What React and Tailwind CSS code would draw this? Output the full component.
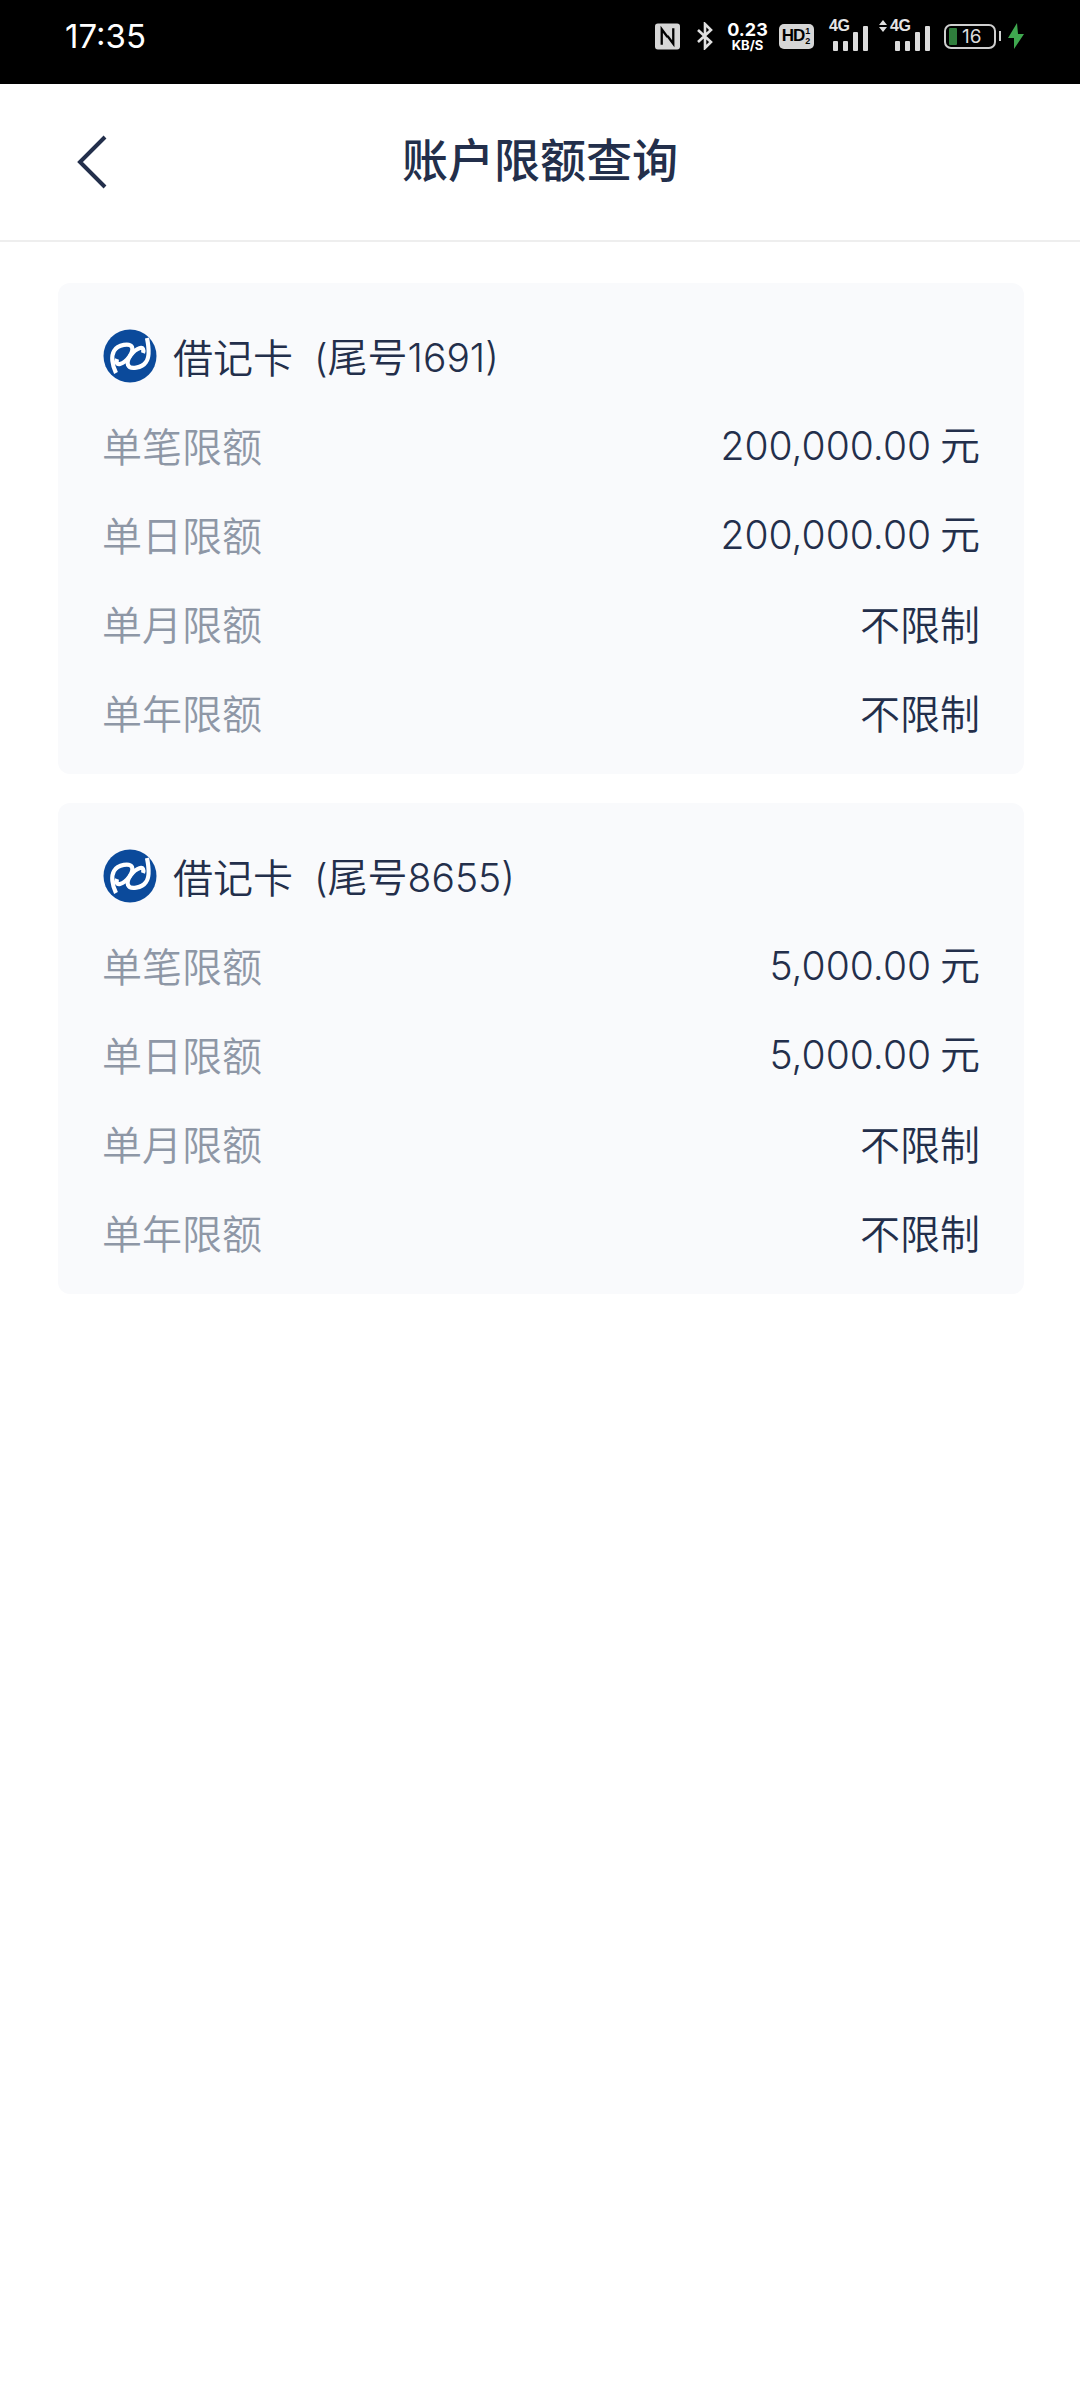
const Logo = () => (
  <svg viewBox="0 0 54 54" className="w-[54px] h-[54px] shrink-0 ml-[1px]">
    <circle cx="27" cy="27" r="26.5" fill="#0b4a9b" />
    <path d="M13 44 C9 36 8 27 11 22 C15 15 27 14 29 18 C31 23 24 33 17 35 C14 36 13 33 14 30" fill="none" stroke="#fff" strokeWidth="4.2" />
    <path d="M44 9 C46 19 47 28 43 33 C39 39 27 41 25 36 C23 31 30 21 37 19 C40 18 41 21 40 24" fill="none" stroke="#fff" strokeWidth="4.2" />
  </svg>
);

const Signal = ({ arrows }) => (
  <div className={arrows ? "relative w-[51px] h-[30px] flex items-end justify-end gap-[5px]" : "relative w-[39px] h-[30px] flex items-end justify-end gap-[5px]"}>
    <span className={arrows ? "absolute left-[11px] top-[-3px] text-[16px] leading-[15px] font-bold text-[#e4e4e4] tracking-[-0.5px]" : "absolute left-0 top-[-3px] text-[16px] leading-[15px] font-bold text-[#e4e4e4] tracking-[-0.5px]"} style={{ fontFamily: '"Liberation Sans", sans-serif' }}>4G</span>
    {arrows && (
      <svg viewBox="0 0 8 12" className="absolute left-0 top-[-1px] w-[8px] h-[12px]">
        <path d="M4 0l4 5H0zM0 7h8l-4 5z" fill="#e0e0e0" />
      </svg>
    )}
    <span className="w-[5px] h-[10px] rounded-[1px] bg-[#dcdcdc]" />
    <span className="w-[5px] h-[10px] rounded-[1px] bg-[#dcdcdc]" />
    <span className="w-[5px] h-[19px] rounded-[1px] bg-[#dcdcdc]" />
    <span className="w-[5px] h-[25px] rounded-[1px] bg-[#dcdcdc]" />
  </div>
);

const StatusIcons = () => (
  <div className="flex items-center h-[72px] pr-[56px]">
    <svg viewBox="0 0 26 27" className="w-[25px] h-[27px] mr-[16px]">
      <rect width="26" height="27" rx="3" fill="#d6d6d6" />
      <path d="M7 22V6l6 8M19 5v16l-6-8" fill="none" stroke="#000" strokeWidth="2.4" />
    </svg>
    <svg viewBox="0 0 18 28" className="w-[18px] h-[28px] mr-[13px]">
      <path d="M2 8l13 12-6 6V2l6 6L2 20" fill="none" stroke="#e0e0e0" strokeWidth="2.6" />
    </svg>
    <div className="flex flex-col items-center w-[41px] mr-[11px] font-bold text-white" style={{ fontFamily: '"Inter", sans-serif' }}>
      <span className="text-[18px] leading-[18px]">0.23</span>
      <span className="text-[13px] leading-[13px]">KB/S</span>
    </div>
    <div className="w-[35px] h-[25px] rounded-[5px] bg-[#d6d6d6] text-black font-bold flex items-center justify-center mr-[15px] text-[17px] tracking-[-1px] overflow-hidden" style={{ fontFamily: '"Liberation Sans", sans-serif' }}>
      HD
      <span className="flex flex-col w-[7px] text-[9px] leading-[10px] text-center tracking-normal">
        <span>1</span>
        <span>2</span>
      </span>
    </div>
    <Signal arrows={false} />
    <div className="w-[11px]" />
    <Signal arrows={true} />
    <div className="w-[14px]" />
    <div className="relative w-[52px] h-[25px] rounded-[7px] border-2 border-[#cfcfcf] mr-[3px]">
      <div className="absolute left-[3px] top-[2px] bottom-[2px] w-[8px] bg-[#2f7d3c] rounded-[1px]" />
      <span className="absolute left-[16px] top-0 text-[19px] leading-[21px] text-[#dcdcdc]" style={{ fontFamily: '"Inter", sans-serif' }}>16</span>
    </div>
    <div className="w-[2px] h-[10px] bg-[#cfcfcf] mr-[7px]" />
    <svg viewBox="0 0 16 26" className="w-[16px] h-[26px]">
      <path d="M9 0L0 15h6v11L16 11h-6z" fill="#3fa84f" />
    </svg>
  </div>
);

const Num = ({ children }) => (
  <span className="text-[39px] font-[350]" style={{ fontFamily: '"Inter", sans-serif' }}>{children}</span>
);

const Row = ({ label, value, unit }) => (
  <div className="flex justify-between items-center h-[89px] text-[40px] leading-[58px] font-[350]">
    <span className="text-[#8e97a6]">{label}</span>
    <span className="text-[#232f4b]">
      {value ? <><Num>{value}</Num> {unit}</> : "不限制"}
    </span>
  </div>
);

const Card = ({ tail, a }) => (
  <div className="bg-[#f9fafc] rounded-[12px] h-[491px] pl-[44px] pr-[44px] pt-[44px]">
    <div className="flex items-center h-[58px] text-[40px] text-[#232f4b] font-[350]">
      <Logo />
      <span className="ml-[16px]">借记卡</span>
      <span className="ml-[21px]"><Num>(</Num>尾号<Num>{tail})</Num></span>
    </div>
    <div className="mt-[15px]">
      <Row label="单笔限额" value={a} unit="元" />
      <Row label="单日限额" value={a} unit="元" />
      <Row label="单月限额" />
      <Row label="单年限额" />
    </div>
  </div>
);

export default function App() {
  return (
    <div className="w-[1080px] h-[2400px] bg-white" style={{ fontFamily: '"Noto Sans CJK SC", sans-serif' }}>
      <div className="h-[84px] bg-black flex justify-between">
        <span className="pl-[65px] text-[33px] leading-[72px] text-white" style={{ fontFamily: '"Inter", sans-serif' }}>17:35</span>
        <StatusIcons />
      </div>
      <div className="relative h-[158px] border-b-2 border-[#eeeeee] flex items-center justify-center pb-[10px]">
        <svg viewBox="0 0 34 56" className="absolute left-[76px] top-[51px] w-[34px] h-[56px]">
          <path d="M29 2L4 27l25 25" fill="none" stroke="#232f4b" strokeWidth="4" />
        </svg>
        <span className="text-[46px] font-medium text-[#232f4b]">账户限额查询</span>
      </div>
      <div className="flex flex-col gap-[29px] pl-[58px] pr-[56px] pt-[41px]">
        <Card tail="1691" a="200,000.00" />
        <Card tail="8655" a="5,000.00" />
      </div>
    </div>
  );
}
